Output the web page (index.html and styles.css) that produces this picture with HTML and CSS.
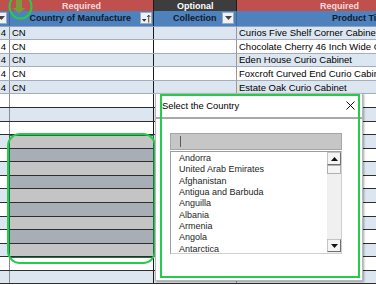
FILE: index.html
```html
<!DOCTYPE html>
<html>
<head>
<meta charset="utf-8">
<title>Select the Country</title>
<link rel="stylesheet" href="styles.css">
</head>
<body>

<div class="sheet">

  <!-- band row: required / optional -->
  <div class="row band">
    <div class="cell c1"></div>
    <div class="cell c2 req"><span class="pad-req1">Required</span></div>
    <div class="cell c3 opt"><span class="pad-opt">Optional</span></div>
    <div class="cell c4 req"><span class="pad-req2">Required</span></div>
  </div>

  <!-- column headings -->
  <div class="row head">
    <div class="cell c1"><span class="filter cut"><svg width="7" height="4" viewBox="0 0 7 4"><path d="M0 0h7L3.5 4z" fill="#444"/></svg></span></div>
    <div class="cell c2"><span class="pad-country">Country of Manufacture</span>
      <span class="filter"><svg width="11" height="11" viewBox="0 0 11 11"><path d="M1 6h5L3.5 9z" fill="#333"/><path d="M8.5 10V2M6.8 3.8L8.5 1.8 10.2 3.8" stroke="#333" stroke-width="1" fill="none"/></svg></span></div>
    <div class="cell c3"><span class="pad-coll">Collection</span>
      <span class="filter"><svg width="7" height="4" viewBox="0 0 7 4"><path d="M0 0h7L3.5 4z" fill="#444"/></svg></span></div>
    <div class="cell c4"><span class="pad-title">Product Title</span></div>
  </div>

  <!-- table rows -->
  <div class="row data blue"><div class="cell c1">4</div><div class="cell c2">CN</div><div class="cell c3"></div><div class="cell c4">Curios Five Shelf Corner Cabinet</div></div>
  <div class="row data"><div class="cell c1">4</div><div class="cell c2">CN</div><div class="cell c3"></div><div class="cell c4">Chocolate Cherry 46 Inch Wide Curio Cabinet</div></div>
  <div class="row data blue"><div class="cell c1">4</div><div class="cell c2">CN</div><div class="cell c3"></div><div class="cell c4">Eden House Curio Cabinet</div></div>
  <div class="row data"><div class="cell c1">4</div><div class="cell c2">CN</div><div class="cell c3"></div><div class="cell c4">Foxcroft Curved End Curio Cabinet</div></div>
  <div class="row data blue"><div class="cell c1">4</div><div class="cell c2">CN</div><div class="cell c3"></div><div class="cell c4">Estate Oak Curio Cabinet</div></div>

  <!-- empty rows below the table -->
  <div class="row empty"><div class="cell c1"></div><div class="cell c2"></div><div class="cell c3"></div><div class="cell c4"></div></div>
  <div class="row empty blue"><div class="cell c1"></div><div class="cell c2"></div><div class="cell c3"></div><div class="cell c4"></div></div>
  <div class="row empty"><div class="cell c1"></div><div class="cell c2"></div><div class="cell c3"></div><div class="cell c4"></div></div>
  <div class="row empty blue"><div class="cell c1"></div><div class="cell c2 sel-a"></div><div class="cell c3"></div><div class="cell c4"></div></div>
  <div class="row empty"><div class="cell c1"></div><div class="cell c2 sel-b"></div><div class="cell c3"></div><div class="cell c4"></div></div>
  <div class="row empty blue"><div class="cell c1"></div><div class="cell c2 sel-a"></div><div class="cell c3"></div><div class="cell c4"></div></div>
  <div class="row empty"><div class="cell c1"></div><div class="cell c2 sel-b"></div><div class="cell c3"></div><div class="cell c4"></div></div>
  <div class="row empty blue"><div class="cell c1"></div><div class="cell c2 sel-a"></div><div class="cell c3"></div><div class="cell c4"></div></div>
  <div class="row empty"><div class="cell c1"></div><div class="cell c2 sel-b"></div><div class="cell c3"></div><div class="cell c4"></div></div>
  <div class="row empty blue"><div class="cell c1"></div><div class="cell c2 sel-a"></div><div class="cell c3"></div><div class="cell c4"></div></div>
  <div class="row empty"><div class="cell c1"></div><div class="cell c2 sel-b"></div><div class="cell c3"></div><div class="cell c4"></div></div>
  <div class="row empty blue"><div class="cell c1"></div><div class="cell c2 sel-a"></div><div class="cell c3"></div><div class="cell c4"></div></div>
  <div class="row empty"><div class="cell c1"></div><div class="cell c2"></div><div class="cell c3"></div><div class="cell c4"></div></div>
  <div class="row empty blue"><div class="cell c1"></div><div class="cell c2"></div><div class="cell c3"></div><div class="cell c4"></div></div>
</div>

<!-- excel selection outline -->
<div class="selection"></div>

<!-- annotations drawn on top of the screenshot -->
<svg class="mark-arrow" width="40" height="24" viewBox="0 0 40 24">
  <path d="M16 0h6v8h3.5L19 13.5 12.5 8H16z" fill="#7a9a3c"/>
  <ellipse cx="20.5" cy="6.5" rx="11" ry="12" fill="none" stroke="#25cc4a" stroke-width="2"/>
</svg>
<div class="mark-box"></div>

<!-- the userform -->
<div class="dialog">
  <div class="dlg-title">
    <span>Select the Country</span>
    <svg width="9" height="9" viewBox="0 0 9 9"><path d="M0.5 0.5l8 8M8.5 0.5l-8 8" stroke="#111" stroke-width="1"/></svg>
  </div>
  <div class="dlg-body">
    <div class="searchbox"><span class="caret"></span></div>
    <div class="listbox">
      <ul class="items">
        <li>Andorra</li>
        <li>United Arab Emirates</li>
        <li>Afghanistan</li>
        <li>Antigua and Barbuda</li>
        <li>Anguilla</li>
        <li>Albania</li>
        <li>Armenia</li>
        <li>Angola</li>
        <li>Antarctica</li>
      </ul>
      <div class="vscroll">
        <div class="sbtn"><svg width="7" height="4" viewBox="0 0 7 4"><path d="M0 4h7L3.5 0z" fill="#111"/></svg></div>
        <div class="thumb"></div>
        <div class="track"></div>
        <div class="sbtn down"><svg width="7" height="4" viewBox="0 0 7 4"><path d="M0 0h7L3.5 4z" fill="#111"/></svg></div>
      </div>
    </div>
  </div>
</div>
<div class="mark-dialog"></div>

</body>
</html>
```

FILE: styles.css
```css
/** page **/
  body {
    margin: 0;
    width: 376px;
    height: 285px;
    overflow: hidden;
    background: #ffffff;
    font-family: "Liberation Sans", Arial, sans-serif;
    font-size: 9.5px;
    color: #000000;
  }

/** the worksheet **/
  .sheet {
    width: 520px;
  }

  .row {
    display: flex;
    box-sizing: border-box;
  }

  .cell {
    box-sizing: border-box;
    display: flex;
    align-items: center;
    overflow: hidden;
    white-space: nowrap;
    height: 100%;
  }

  .c1 { width: 10px; border-right: 1px solid #8c8c8c; justify-content: flex-end; padding-right: 3px; }
  .c2 { width: 144px; border-right: 1px solid #1c1c1c; padding-left: 2px; }
  .c3 { width: 83px; border-right: 1px solid #9a9a9a; }
  .c4 { width: 283px; padding-left: 2px; }

/** top band: required / optional **/
  .band {
    height: 11px;
    font-weight: bold;
    font-size: 9px;
  }
  .band .req { background: #c0504d; color: #f4dcdb; }
  .band .opt { background: #3d3d3d; color: #ffffff; }
  .band .c1 { background: #c0504d; border-right: none; }
  .band .c2 { border-right: 1px solid #1c1c1c; }
  .band .c3 { border-right: 1px solid #1c1c1c; }
  .pad-req1 { padding-left: 50px; }
  .pad-opt { padding-left: 23px; }
  .pad-req2 { padding-left: 81px; }

/** column heading row **/
  .head {
    height: 15.5px;
    background: #4f81bd;
    color: #0e1a2e;
    font-weight: bold;
    font-size: 9px;
    border-bottom: 1px solid #8da3c0;
  }
  .head .c1 { border-right: 1px solid #3e6799; padding-right: 0; justify-content: flex-start; }
  .head .c3 { border-right: 1px solid #3e6799; justify-content: space-between; padding-right: 2px; }
  .head .c2 { justify-content: space-between; padding-right: 1px; }
  .pad-country { padding-left: 17.5px; }
  .pad-coll { padding-left: 19px; }
  .pad-title { padding-left: 93px; }

  .filter {
    box-sizing: border-box;
    width: 12px;
    height: 12px;
    background: #eef1f5;
    border: 1px solid #9aaac0;
    display: flex;
    align-items: center;
    justify-content: center;
    flex-shrink: 0;
  }
  .filter.cut { margin-left: -5px; }

/** body rows **/
  .data, .empty {
    height: 13.58px;
  }
  .data {
    border-bottom: 1px solid #a5adb8;
  }
  .empty {
    border-bottom: 1px solid #2e2e2e;
  }
  .blue .cell { background: #dce6f1; }
  .data .c1, .empty .c1 { background: #ffffff; }
  .blue .c1 { background: #dce6f1; }

  .sel-a, .blue .sel-a { background: #c4c4c4; }
  .sel-b { background: #a8aeb6; }

/** excel selection outline **/
  .selection {
    position: absolute;
    left: 9px;
    top: 134.5px;
    width: 143px;
    height: 121.5px;
    border: 1px solid #217346;
  }

/** annotations **/
  .mark-arrow {
    position: absolute;
    left: 0;
    top: 0;
  }

  .mark-box {
    position: absolute;
    left: 7px;
    top: 133px;
    width: 145px;
    height: 127px;
    border: 2px solid #25cc4a;
    border-radius: 13px;
  }

  .mark-dialog {
    position: absolute;
    left: 160px;
    top: 94px;
    width: 196px;
    height: 180px;
    border: 2px solid #25cc4a;
  }

/** the country dialog **/
  .dialog {
    position: absolute;
    left: 155px;
    top: 93px;
    width: 208px;
    height: 188px;
    box-sizing: border-box;
    background: #ffffff;
    border: 1px solid #b8b8b8;
    box-shadow: 1px 1px 2px rgba(0, 0, 0, 0.35);
    display: flex;
    flex-direction: column;
    font-family: "Liberation Sans", Arial, sans-serif;
  }

  .dlg-title {
    height: 23px;
    flex-shrink: 0;
    display: flex;
    align-items: center;
    justify-content: space-between;
    padding: 0 7px 0 6px;
    font-size: 9.4px;
    color: #000000;
    border-bottom: 2px solid #a9a9a9;
  }

  .dlg-body {
    padding: 14px 20px 0 14px;
  }

  .searchbox {
    height: 17px;
    box-sizing: border-box;
    background: #c6c6c6;
    border: 1px solid #a5a5a5;
    display: flex;
    align-items: center;
    padding-left: 9px;
  }
  .caret {
    width: 1px;
    height: 11px;
    background: #5a5a5a;
  }

  .listbox {
    margin-top: 1px;
    height: 103px;
    box-sizing: border-box;
    border: 1px solid #9c9c9c;
    border-right-color: #d0d0d0;
    border-bottom-color: #d0d0d0;
    display: flex;
  }

  .items {
    flex: 1;
    list-style: none;
    margin: 0;
    padding: 1px 0 0 8px;
    font-size: 9px;
    line-height: 11.33px;
    color: #1e1e1e;
    overflow: hidden;
  }

  .vscroll {
    width: 14px;
    display: flex;
    flex-direction: column;
    background: #f0f0f0;
    padding-bottom: 1px;
  }
  .sbtn {
    height: 13px;
    box-sizing: border-box;
    background: #f4f4f4;
    border: 1px solid #c4c4c4;
    border-right-color: #707070;
    border-bottom-color: #707070;
    display: flex;
    align-items: center;
    justify-content: center;
  }
  .thumb {
    height: 9px;
    box-sizing: border-box;
    border: 1px solid #b0b0b0;
    background: #f4f4f4;
  }
  .track {
    flex: 1;
  }
```
